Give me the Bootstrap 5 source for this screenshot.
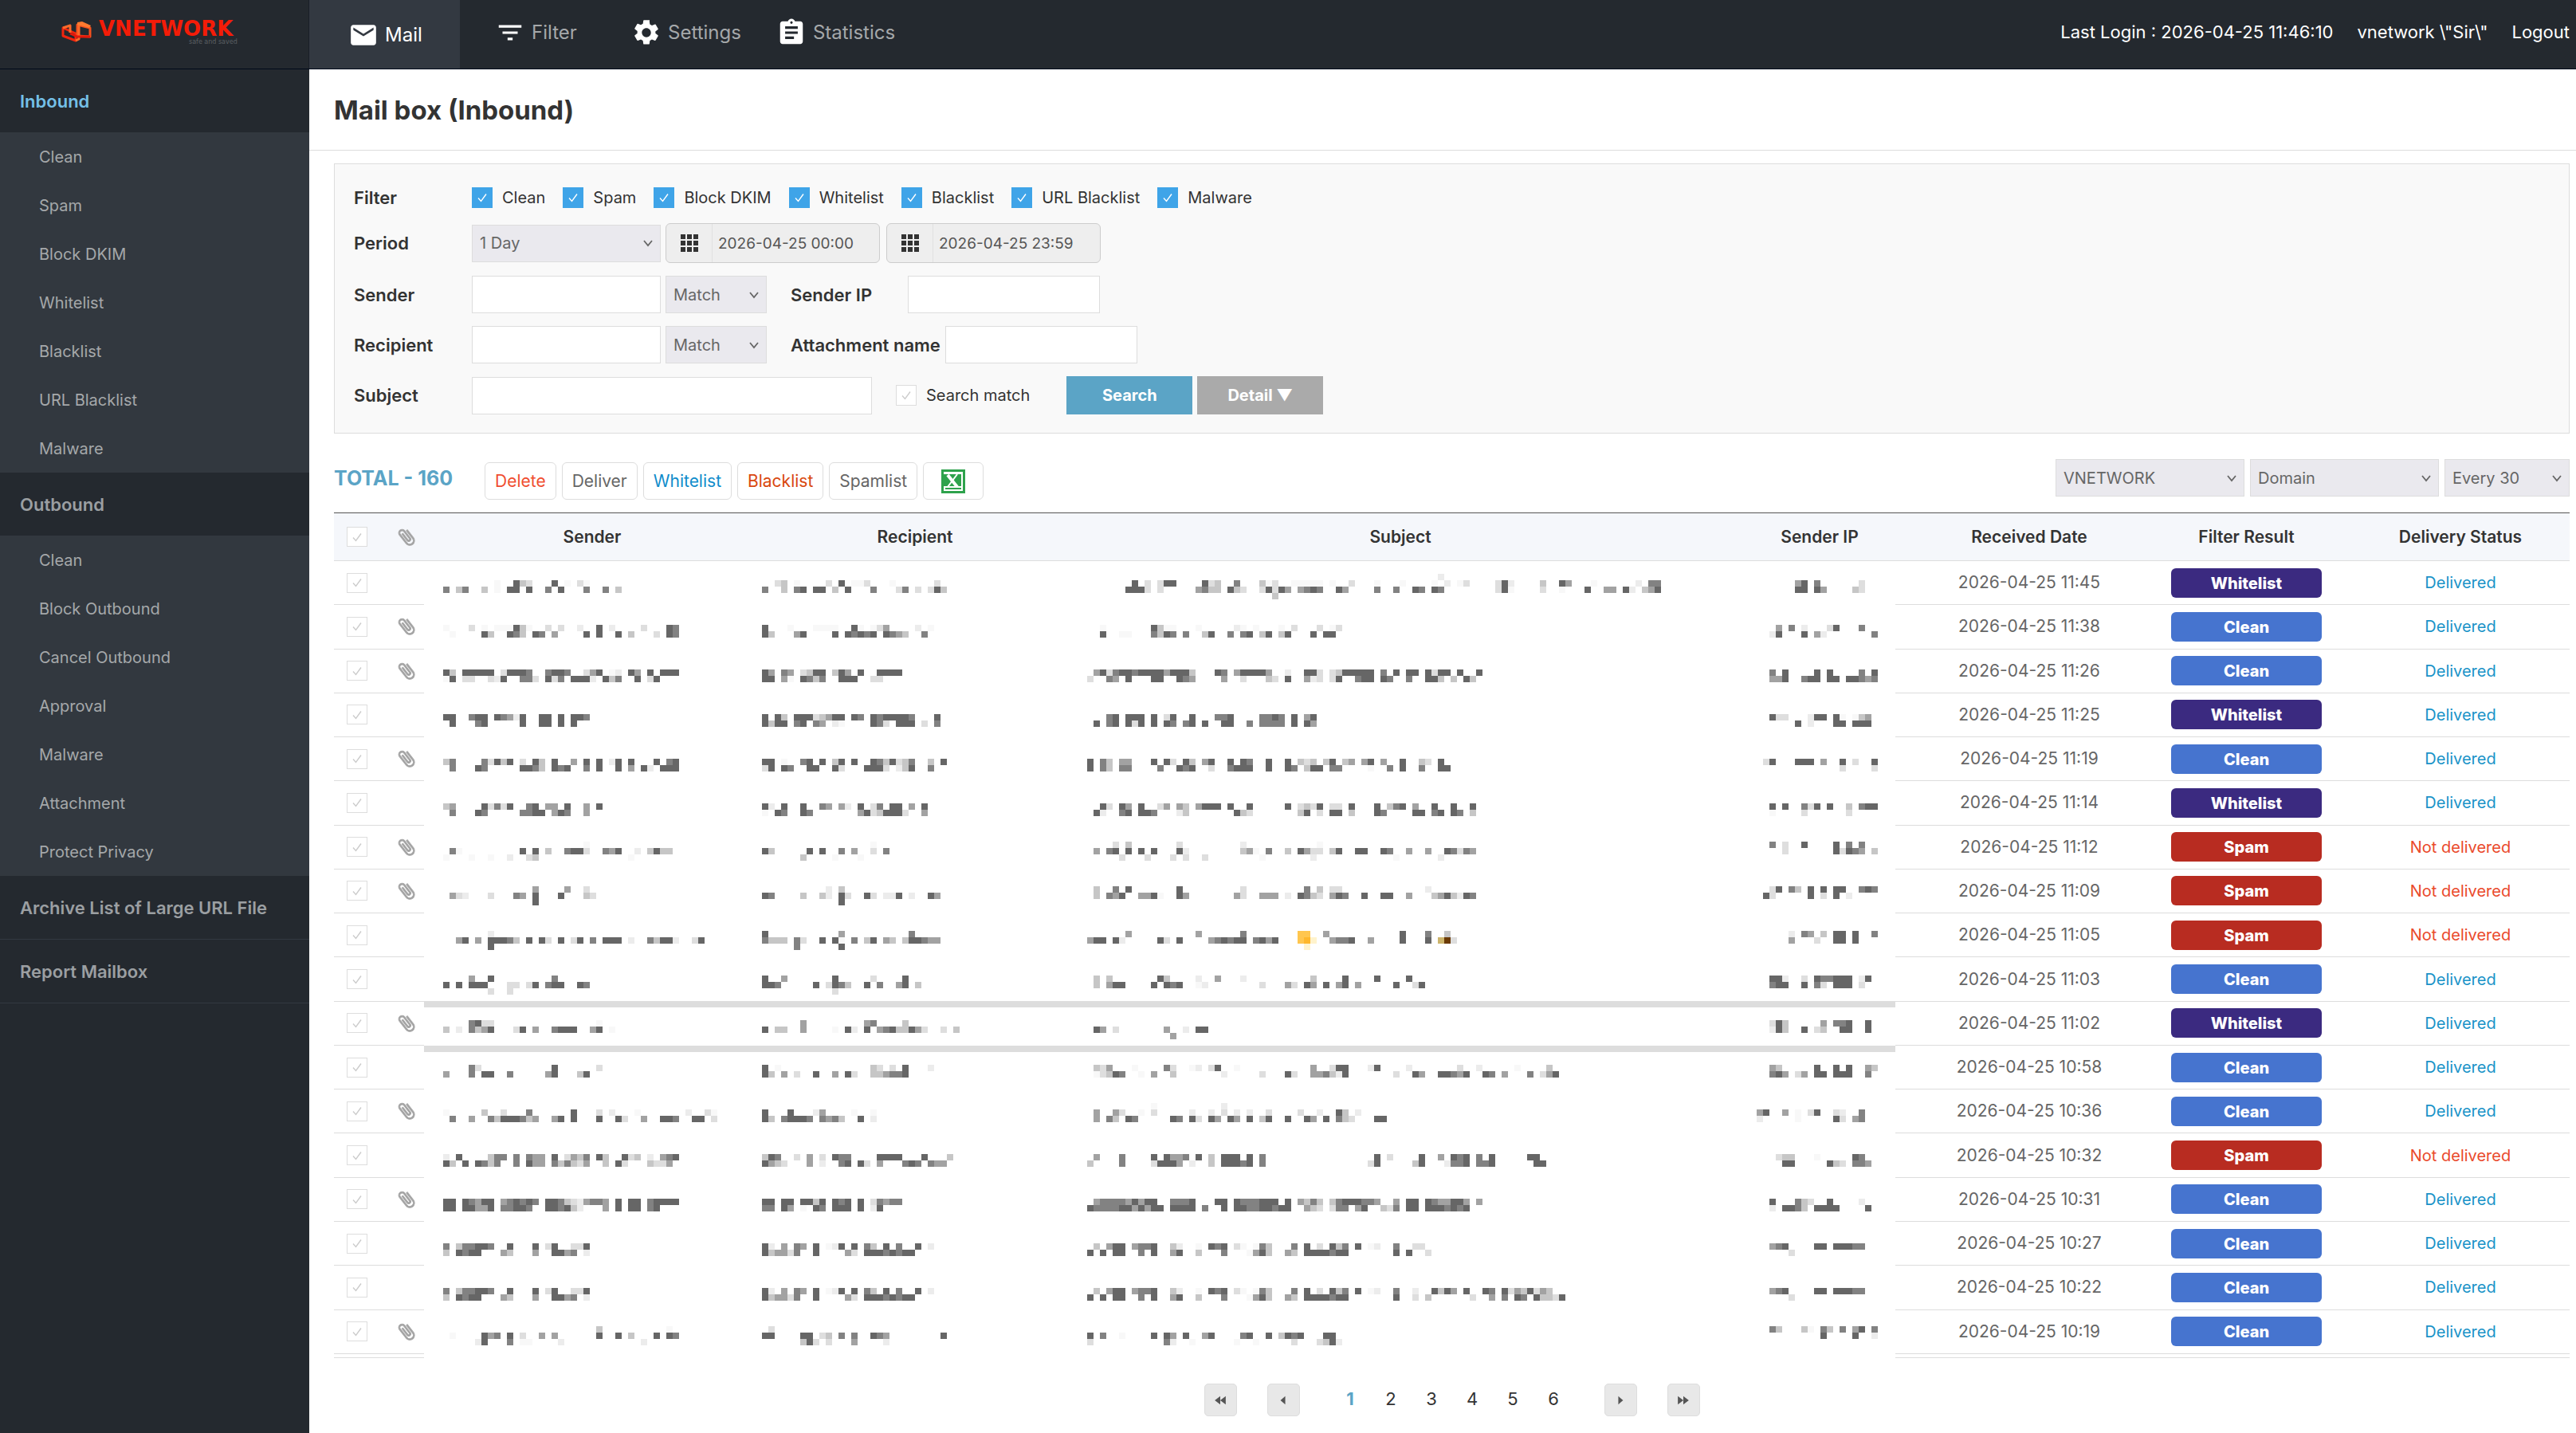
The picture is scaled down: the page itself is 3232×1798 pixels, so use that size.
<!DOCTYPE html>
<html lang="en">
<head>
<meta charset="utf-8">
<meta name="viewport" content="width=device-width, initial-scale=1">
<title>Mail box (Inbound)</title>
<link rel="stylesheet" href="https://cdn.jsdelivr.net/npm/bootstrap@5.3.0/dist/css/bootstrap.min.css">
<style>
  :root { --side-w: 388px; --ink: #333; --line: #ddd; --sky: #5ba4c6; }
  body { font-family: Inter, "Liberation Sans", sans-serif; font-size: 20px; line-height: 26px; color: var(--ink); background: #fff; }
  a { text-decoration: none; color: inherit; }

  .topbar { height: 87px; background: #24292f; border-bottom: 1px solid #00091a; }
  .brand-box { width: var(--side-w); border-right: 1px solid #1a1f28; padding: 16px 0 0 77px; }
  .main-menu a { font-size: 24px; color: #a5a8aa; padding: 0 0 4px 44px; gap: 8px; }
  .main-menu svg { width: 38px; height: 38px; fill: #fff; }
  .main-menu .menu-filter { width: 171px; }
  .main-menu .menu-mail { width: 189px; padding: 2px 0 0 49px; background: #333941; color: #fff; }
  .account { font-size: 22px; color: #fff; gap: 30px; padding: 0 8px 6px 0; }

  .sidebar { width: var(--side-w); background: #24292f; min-height: calc(100vh - 87px); }
  .side-head { font-size: 22px; font-weight: 600; color: #9b9fa2; height: 79px; padding-left: 25px; }
  .side-head.is-open { color: #74c0e8; }
  .side-head.is-ruled { height: 80px; border-bottom: 1px solid #333941; }
  .side-sub { background: #32383f; }
  .side-sub a { height: 61px; padding: 1px 0 0 49px; color: #a5a8aa; }

  .page-title { font-size: 33px; line-height: 40px; font-weight: 700; padding: 31px 31px 30px; border-bottom: 1px solid var(--line); margin: 0; }
  .page-body { padding: 16px 8px 0 31px; }

  .search-panel { background: #f9f9f9; border: 1px solid var(--line); padding: 29px 24px 23px; }
  .field-name { font-size: 22px; font-weight: 600; }
  .lead-name { width: 142px; }
  .side-name { min-width: 141px; margin-left: 24px; }
  .search-panel .line { display: flex; align-items: center; gap: 6px; }
  .search-panel .line:first-child { margin-bottom: 3px; }
  .tick-list { gap: 22px; }
  .tick { gap: 12px; }

  input[type=checkbox] { appearance: none; width: 26px; height: 26px; margin: 0; border: 1px solid var(--line); background: #fff center/16px no-repeat; display: block; flex: none;
    background-image: url("data:image/svg+xml,%3Csvg xmlns='http://www.w3.org/2000/svg' viewBox='0 0 16 16'%3E%3Cpath d='M3 8.5l3.5 4L13 3.5' fill='none' stroke='%23ccc' stroke-width='1.4'/%3E%3C/svg%3E"); }
  input[type=checkbox]:checked { background-color: #3fa4e8; border-color: #3fa4e8;
    background-image: url("data:image/svg+xml,%3Csvg xmlns='http://www.w3.org/2000/svg' viewBox='0 0 16 16'%3E%3Cpath d='M3 8.5l3.5 4L13 3.5' fill='none' stroke='%23fff' stroke-width='1.4'/%3E%3C/svg%3E"); }

  select.flat { appearance: none; height: 47px; border: 1px solid var(--line); border-radius: 0; color: #666; font-size: 20px; padding: 0 28px 0 9px;
    background: #eae9ee no-repeat right 9px center/12px 12px;
    background-image: url("data:image/svg+xml,%3Csvg xmlns='http://www.w3.org/2000/svg' viewBox='0 0 12 12'%3E%3Cpath d='M1 3l5 6 5-6' fill='none' stroke='%23666' stroke-width='1.8'/%3E%3C/svg%3E"); }
  input.plain { height: 47px; border: 1px solid var(--line); background: #fff; padding: 0 9px; color: #666; }
  .w-field { width: 237px; } .w-match { width: 127px; } .w-short { width: 241px; } .w-long { width: 502px; } .w-page { width: 157px; }

  .date-box { width: 269px; height: 50px; background: #eee; border: 1px solid #ccc; border-radius: 6px; margin-right: 2px; overflow: hidden; }
  .date-box svg { width: 57px; height: 22px; flex: none; }
  .date-box input { border: 0; border-left: 1px solid #e0e0e0; background: transparent; height: 48px; width: 100%; font-size: 19px; color: #555; padding: 0 0 0 7px; }

  .act { height: 48px; width: 158px; border: 0; border-radius: 0; color: #fff; font-size: 20px; font-weight: 700; padding: 0; }
  .act:hover { color: #fff; }
  .act-go { background: var(--sky); margin-left: 40px; }
  .act-more { background: #aaa; }

  .tools { padding: 32px 0 16px; gap: 7px; }
  .tools .total { font-size: 25px; font-weight: 700; line-height: 48px; color: var(--sky); width: 182px; }
  .tool { font-size: 21px; line-height: 26px; height: 47px; background: #fff; border: 1px solid var(--line); border-radius: 6px; padding: 1px 12px 0; color: #666; margin-top: 4px; }
  .tool-x { width: 76px; }
  .tool-del { color: #f04e30; } .tool-white { color: #0f8ccb; } .tool-black { color: #d9480f; }

  .mail-table { table-layout: fixed; border-collapse: separate; border-spacing: 0; margin: 0; color: #666; text-align: center; }
  .mail-table > :not(caption) > * > * { padding: 0; vertical-align: middle; border-bottom: 1px solid var(--line); }
  .mail-table > thead > tr > th { height: 61px; background: #f5f7fb; color: #333; font-size: 21px; font-weight: 600; border-top: 1px solid #555; }
  .mail-table > tbody > tr { height: 55px; }
  .mail-table > tbody > tr.tail, .mail-table > tbody > tr.tail > td { height: 5px; font-size: 0; line-height: 0; }
  .mail-table > tbody > tr > td.veil { vertical-align: top; border: 0; overflow: hidden; }
  .mail-table input { height: 25px; margin-left: 16px; }
  .mail-table .clip svg { width: 26px; height: 26px; fill: #999; stroke: #aaa; stroke-width: 1; display: block; margin-left: 20px; }
  .mail-table .when { font-size: 21px; }
  .mail-table > thead > tr > .topic { padding-right: 16px; }
  .mail-table > :not(caption) > * > .last { padding-left: 27px; }
  .sent { color: #1a93c8; } .unsent { color: #ea4a2c; }
  .pill { display: block; height: 37px; line-height: 38px; width: 189px; margin: 0 auto; border-radius: 6px; color: #fff; font-weight: 800; }
  .pill-Whitelist { background: #3b2a80; } .pill-Clean { background: #4674cf; } .pill-Spam { background: #b82c21; }

  .pager { padding: 32px 0 16px; gap: 38px; font-size: 22px; }
  .pager button { width: 41px; height: 41px; border: 1px solid #ddd; border-radius: 5px; background: #e8e8e8; padding: 0; display: flex; align-items: center; justify-content: center; }
  .pager svg { width: 18px; height: 12px; fill: #555; }
  .pager .nums { padding-bottom: 4px; }
  .pager .nums a { width: 51px; text-align: center; }
  .pager .nums .on { color: var(--sky); font-weight: 700; }
</style>
<script src="https://cdn.jsdelivr.net/npm/bootstrap@5.3.0/dist/js/bootstrap.bundle.min.js"></script>
</head>
<body>
<header class="topbar d-flex">
  <a class="brand-box flex-shrink-0" href="#" aria-label="VNETWORK">
    <svg width="240" height="46" viewBox="0 -10 240 46">
      <g stroke-linejoin="round" fill="none" stroke-width="3">
        <path d="M2 9l16 7v9l-16-6z" stroke="#f0250f"/>
        <path d="M20 5l16 4v11l-16-1z" stroke="#f4511e"/>
        <path d="M2 9l9-3v9M18 25l4-2V5" stroke="#ff6a2a"/>
        <path d="M20 2l6-1 11 5-2 3-15-4z" fill="#ff7a30" stroke="none"/>
        <path d="M11 16l9 4 16 0" stroke="#e3170a"/>
      </g>
      <text x="47" y="19" font-family="DejaVu Sans" font-weight="700" font-size="26" fill="#f41c08">VNETWORK</text>
      <text x="160" y="29" font-family="DejaVu Sans" font-size="8" fill="#5c6064">safe and saved</text>
    </svg>
  </a>
  <nav class="main-menu d-flex flex-grow-1">
    <a class="menu-mail d-flex align-items-center" href="#"><svg viewBox="0 0 24 24"><path d="M20 4H4c-1.100 0-2 .9-2 2v12c0 1.100.9 2 2 2h16c1.100 0 2-.9 2-2V6c0-1.100-.9-2-2-2zm0 4l-8 5-8-5V6l8 5 8-5v2z"/></svg>Mail</a>
    <a class="menu-filter d-flex align-items-center" href="#"><svg viewBox="0 0 24 24"><path d="M10 18h4v-2h-4v2zM3 6v2h18V6H3zm3 7h12v-2H6v2z"/></svg>Filter</a>
    <a class="d-flex align-items-center" href="#"><svg viewBox="0 0 24 24"><path d="M19.140 12.940c.04-.3.06-.61.06-.94s-.02-.64-.07-.94l2.030-1.580a.49.49 0 0 0 .12-.61l-1.920-3.320a.49.49 0 0 0-.59-.22l-2.390.96a7 7 0 0 0-1.620-.94l-.36-2.540A.48.48 0 0 0 13.920 2h-3.840a.48.48 0 0 0-.47.41l-.36 2.540c-.59.24-1.130.57-1.620.94l-2.390-.96a.48.48 0 0 0-.59.22L2.740 8.470a.48.48 0 0 0 .12.61l2.030 1.580c-.05.3-.09.63-.09.94s.02.64.07.94l-2.030 1.580a.49.49 0 0 0-.12.61l1.920 3.320c.12.22.37.29.59.22l2.390-.96c.5.38 1.030.7 1.620.94l.36 2.540c.05.24.24.41.48.41h3.840c.24 0 .44-.17.47-.41l.36-2.540a6.700 6.700 0 0 0 1.620-.94l2.390.96c.22.08.47 0 .59-.22l1.920-3.320a.48.48 0 0 0-.12-.61l-2.010-1.580zM12 15.600A3.610 3.610 0 0 1 8.400 12c0-1.980 1.620-3.600 3.600-3.600s3.600 1.620 3.600 3.600-1.620 3.600-3.600 3.600z"/></svg>Settings</a>
    <a class="d-flex align-items-center" href="#"><svg viewBox="0 0 24 24"><path d="M19 3h-4.180C14.400 1.840 13.300 1 12 1s-2.400.84-2.820 2H5c-1.100 0-2 .9-2 2v14c0 1.100.9 2 2 2h14c1.100 0 2-.9 2-2V5c0-1.100-.9-2-2-2zm-7 0c.55 0 1 .45 1 1s-.45 1-1 1-1-.45-1-1 .45-1 1-1zm2 14H7v-2h7v2zm3-4H7v-2h10v2zm0-4H7V7h10v2z"/></svg>Statistics</a>
  </nav>
  <div class="account d-flex align-items-center">
    <span>Last Login : 2026-04-25 11:46:10</span>
    <a href="#">vnetwork \"Sir\"</a>
    <a href="#">Logout</a>
  </div>
</header>

<div class="d-flex">
  <aside class="sidebar flex-shrink-0">
    <a class="side-head is-open d-flex align-items-center" href="#">Inbound</a>
    <nav class="side-sub">
      <a class="d-flex align-items-center" href="#">Clean</a>
      <a class="d-flex align-items-center" href="#">Spam</a>
      <a class="d-flex align-items-center" href="#">Block DKIM</a>
      <a class="d-flex align-items-center" href="#">Whitelist</a>
      <a class="d-flex align-items-center" href="#">Blacklist</a>
      <a class="d-flex align-items-center" href="#">URL Blacklist</a>
      <a class="d-flex align-items-center" href="#">Malware</a>
    </nav>
    <a class="side-head d-flex align-items-center" href="#">Outbound</a>
    <nav class="side-sub">
      <a class="d-flex align-items-center" href="#">Clean</a>
      <a class="d-flex align-items-center" href="#">Block Outbound</a>
      <a class="d-flex align-items-center" href="#">Cancel Outbound</a>
      <a class="d-flex align-items-center" href="#">Approval</a>
      <a class="d-flex align-items-center" href="#">Malware</a>
      <a class="d-flex align-items-center" href="#">Attachment</a>
      <a class="d-flex align-items-center" href="#">Protect Privacy</a>
    </nav>
    <a class="side-head is-ruled d-flex align-items-center" href="#">Archive List of Large URL File</a>
    <a class="side-head is-ruled d-flex align-items-center" href="#">Report Mailbox</a>
  </aside>

  <main class="flex-grow-1">
    <h1 class="page-title">Mail box (Inbound)</h1>
    <div class="page-body">
      <form class="search-panel d-flex flex-column gap-3">
        <div class="line">
          <span class="field-name lead-name">Filter</span>
          <div class="tick-list d-flex" id="ticks"></div>
        </div>
        <div class="line">
          <label class="field-name lead-name" for="period">Period</label>
          <select class="flat w-field" id="period"><option>1 Day</option></select>
          <div class="date-box d-flex align-items-center">
            <svg viewBox="-18 0 57 22" fill="#333"><path d="M0 0h6v6H0zM8 0h6v6H8zM16 0h6v6h-6zM0 8h6v6H0zM8 8h6v6H8zM16 8h6v6h-6zM0 16h6v6H0zM8 16h6v6H8zM16 16h6v6h-6z"/></svg>
            <input type="text" aria-label="From" value="2026-04-25 00:00">
          </div>
          <div class="date-box d-flex align-items-center">
            <svg viewBox="-18 0 57 22" fill="#333"><path d="M0 0h6v6H0zM8 0h6v6H8zM16 0h6v6h-6zM0 8h6v6H0zM8 8h6v6H8zM16 8h6v6h-6zM0 16h6v6H0zM8 16h6v6H8zM16 16h6v6h-6z"/></svg>
            <input type="text" aria-label="To" value="2026-04-25 23:59">
          </div>
        </div>
        <div class="line">
          <label class="field-name lead-name" for="sender">Sender</label>
          <input class="plain w-field" id="sender" type="text">
          <select class="flat w-match" aria-label="Sender match"><option>Match</option></select>
          <label class="field-name side-name" for="ip">Sender IP</label>
          <input class="plain w-short" id="ip" type="text">
        </div>
        <div class="line">
          <label class="field-name lead-name" for="rcpt">Recipient</label>
          <input class="plain w-field" id="rcpt" type="text">
          <select class="flat w-match" aria-label="Recipient match"><option>Match</option></select>
          <label class="field-name side-name" for="att">Attachment name</label>
          <input class="plain w-short" id="att" type="text">
        </div>
        <div class="line">
          <label class="field-name lead-name" for="subj">Subject</label>
          <input class="plain w-long" id="subj" type="text">
          <label class="tick d-flex align-items-center ms-4"><input type="checkbox">Search match</label>
          <button class="btn act act-go" type="button">Search</button>
          <button class="btn act act-more" type="button">Detail ▼</button>
        </div>
      </form>

      <div class="tools d-flex align-items-start">
        <span class="total">TOTAL - 160</span>
        <button class="tool tool-del" type="button">Delete</button>
        <button class="tool" type="button">Deliver</button>
        <button class="tool tool-white" type="button">Whitelist</button>
        <button class="tool tool-black" type="button">Blacklist</button>
        <button class="tool" type="button">Spamlist</button>
        <button class="tool tool-x d-flex align-items-center justify-content-center" type="button" aria-label="Export to Excel">
          <svg width="30" height="30" viewBox="0 0 30 30"><path d="M0 0h30v30H0z" fill="#2ea24c"/><path d="M3 3h24v24H3z" fill="#fff"/><path d="M3 6h20v15H3z" fill="#2ea24c"/><path d="M8 7l12 15" stroke="#fff" stroke-width="4"/><path d="M20 6L8 22" stroke="#fff" stroke-width="2"/><path d="M23 6h2v15h-2zM5 23h20v2H5z" fill="#2ea24c"/></svg>
        </button>
        <select class="flat w-field ms-auto" aria-label="Company"><option>VNETWORK</option></select>
        <select class="flat w-field" aria-label="Domain"><option>Domain</option></select>
        <select class="flat w-page" aria-label="Rows per page"><option>Every 30</option></select>
      </div>

      <table class="table mail-table">
        <colgroup><col style="width:58px"><col style="width:55px"><col style="width:422px"><col style="width:388px"><col><col style="width:190px"><col style="width:336px"><col style="width:209px"><col style="width:301px"></colgroup>
        <thead><tr>
          <th><input type="checkbox" aria-label="Select all"></th>
          <th class="clip"><svg viewBox="0 0 24 24"><path transform="rotate(-38 12 12)" d="M16.500 6v11.500c0 2.210-1.790 4-4 4s-4-1.790-4-4V5a2.500 2.500 0 0 1 5 0v10.500c0 .55-.45 1-1 1s-1-.45-1-1V6H10v9.500a2.500 2.500 0 0 0 5 0V5c0-2.210-1.790-4-4-4S7 2.790 7 5v12.500c0 3.040 2.460 5.500 5.500 5.500s5.500-2.460 5.500-5.500V6h-1.500z"/></svg></th>
          <th>Sender</th><th>Recipient</th><th class="topic">Subject</th><th>Sender IP</th><th>Received Date</th><th>Filter Result</th><th class="last">Delivery Status</th>
        </tr></thead>
        <tbody id="rows"></tbody>
      </table>

      <nav class="pager d-flex justify-content-center align-items-center" aria-label="Pages">
        <button type="button" aria-label="First"><svg viewBox="0 0 18 14"><path d="M9 1v12L1 7zM17 1v12L9 7z"/></svg></button>
        <button type="button" aria-label="Previous"><svg viewBox="0 0 18 14"><path d="M12 1v12L5 7z"/></svg></button>
        <div class="nums d-flex"><a class="on" href="#">1</a><a href="#">2</a><a href="#">3</a><a href="#">4</a><a href="#">5</a><a href="#">6</a></div>
        <button type="button" aria-label="Next"><svg viewBox="0 0 18 14"><path d="M6 1v12l7-6z"/></svg></button>
        <button type="button" aria-label="Last"><svg viewBox="0 0 18 14"><path d="M1 1v12l8-6zM9 1v12l8-6z"/></svg></button>
      </nav>
    </div>
  </main>
</div>

<script>
document.getElementById('ticks').innerHTML = ['Clean','Spam','Block DKIM','Whitelist','Blacklist','URL Blacklist','Malware']
  .map(t => `<label class="tick d-flex align-items-center"><input type="checkbox" checked>${t}</label>`).join('');

// time, result, has attachment
const mails = [
  ['11:45','Whitelist',0],['11:38','Clean',1],['11:26','Clean',1],['11:25','Whitelist',0],['11:19','Clean',1],['11:14','Whitelist',0],
  ['11:12','Spam',1],['11:09','Spam',1],['11:05','Spam',0],['11:03','Clean',0],['11:02','Whitelist',1],['10:58','Clean',0],
  ['10:36','Clean',1],['10:32','Spam',0],['10:31','Clean',1],['10:27','Clean',0],['10:22','Clean',0],['10:19','Clean',1]];

// Pixelated cell contents. Each row holds sender, recipient, subject, IP;
// each of those holds up to four pixel lines (the fourth lies above the first) of "column:shades".
const veil = [
["8:1 11:743 17:7 19:1 21:31|0:6 2:46 6:4 8:1 10:77 13:7 16:6 18:7 22:6 25:6 27:4","2:34 5:1 10:3 12:7 14:11 16:3 20:1 27:3|0:6 3:4 5:67 8:77 11:4 13:7 17:6 21:3 22:6 24:3 26:37 28:4","7:7 9:3 11:377 18:73 20:4 23:6 27:413 32:111 35:11 38:1 41:3 45:1 49:1 54:1 56:2 58:13 64:37 66:2 71:4 74:75 79:1 86:2 88:66|6:777 9:3 11:3 17:5 18:644 22:743 27:37 29:375 33:5676 39:75 45:6 48:6 51:76 54:76 64:37 66:1 71:3 74:1 78:7 81:55 84:72 87:457|29:4|55:2","6:57 9:6 16:3|6:77 9:75 15:43"],
["0:1 4:3 6:1 8:11 10:174 13:1 16:3 18:3 21:2 24:7 26:2 31:3 35:76|1:1 6:74 10:764 14:76 17:5 22:7 24:7 27:7 29:4 33:3 35:76","0:7 4:1 8:1111 14:7 15:1 17:1 18:35 24:2 26:1|0:74 5:57 11:7 13:76767 19:7654 25:6","2:1 10:74 12:1 13:1 17:1 23:21 26:1 30:1 32:3 36:3 38:1 39:3|2:7 5:11 10:6476 15:6 18:47 22:6 24:67 27:47 30:47 35:7 37:77","3:5 5:6 7:2 11:37 16:6|2:27 7:7 9:52 18:6"],
["0:74 3:77777 9:3 10:7776 16:6776 22:357 26:12 29:75 32:7 34:777|0:17 3:33 7:3 8:27 12:663 16:736 20:777 23:2 25:7 26:46 30:7 32:37","0:75 3:65 6:347 9:7 11:47 13:5 15:7 18:7777|0:77 3:51 6:76 8:46 12:777 17:33","1:573 4:677677775 13:777 16:4 20:76 23:577775 31:2 34:773 38:3 39:477777 46:6 48:7 50:77 53:7 54:377 58:7 61:7|0:3 3:65 6:7 10:77 14:76 16:5 21:5 24:3 28:43 31:7 34:52 36:3 38:3 39:7 42:677 46:76 50:6 53:774 57:4 59:74","2:6 4:7 9:7 11:7 16:6 18:7|2:557 7:677 11:77 14:77655 18:6"],
["0:77 4:677 8:7652 12:7 15:77 18:7 20:776|1:7 5:67 12:7 15:77 18:7 20:7","0:7 2:74 5:7776 8:345 11:77 14:76 17:767 20:77 22:76 27:7|0:7477 5:67 8:65 11:21 17:763 21:777 25:3 27:6","3:67 6:777 10:7 12:37 16:7 20:667 27:6676 32:7 34:57|1:7 3:67 6:737 10:7 12:76 15:67 18:7 21:77 25:6 27:6666 32:7 34:75","2:733 8:277 12:71 15:145|6:7 8:2 12:77 15:777"],
["0:46 6:6374 10:7 12:3 14:74 17:7 20:5 22:7 24:7 26:2 27:7 29:7 33:7 35:67|1:6 5:76 12:7764 17:767 22:6 24:7 27:7 29:5 31:72 34:777","0:77 3:1 6:67 9:7 11:47 14:7 17:764 20:73 22:46 26:4 28:7|0:37 3:76 7:77 11:73 16:7773 21:247 26:6","0:7 2:64 5:55 10:7 12:73 15:74 18:57 22:7 24:76 28:7 31:7 33:434 37:47 40:45 43:57 46:5 49:7 52:43 55:7|0:7 2:64 5:66 11:6 14:767 19:3 22:6777 28:7 31:76 34:477 38:66 44:1 47:6 49:7 52:6 55:77","1:37 6:777 10:5 13:7 15:3 18:7|13:3 18:3"],
["0:45 6:7363 10:7 13:67 16:55 19:7 22:5 24:7|1:6 5:76 12:6677 17:57 19:6 22:5","0:72 3:7 6:7 9:65 12:52 15:7 17:36 20:77 23:5 25:7|0:1 2:76 6:76 15:57 17:34 19:777 22:3 25:5","2:73 5:75 8:7 11:35 14:54 17:5777 22:7 25:7 31:7 33:343 36:7 38:33 41:7 45:7 47:467 51:5 54:7 57:7 60:7|1:72 5:67 8:776 14:24 23:743 33:4 34:7 36:3 38:77 41:4 45:76 51:77 54:67 57:76 60:4","2:7 4:7 7:637 11:7 14:4 16:677|2:1 7:3 14:3"],
["22:1|1:61 12:7 14:7 16:4 19:6773 25:657 30:2 32:4744|0:1 4:1 7:1 10:2 13:34 29:1","17:1|0:74 7:7 9:7 12:6 14:5 17:3 19:6|6:4 11:1 15:1","4:3 6:4 14:3 24:2 36:1|1:5 3:67 6:7 8:7 10:7 14:72 24:451 28:6 31:4 33:753 36:3 38:47 42:77 46:76 50:5 53:5 56:763 59:65|5:3 9:3 13:3 15:3 18:3 27:1 35:2 48:1 55:2","2:6 4:3 7:7 12:7 14:6 16:6|4:3 12:7376 16:5 18:4"],
["14:5 19:5 22:3|1:532 7:3 11:65 14:7 18:7 22:43|14:7","10:2 12:4|0:76 6:4 9:42 12:73 16:73 19:221 21:7 23:2 26:75|12:7","1:4 4:6 6:7 14:7 24:3 34:6 36:4 38:33 53:2|1:4 3:657 8:5571 14:75 23:53 27:555 31:2 33:7643 38:576 43:7 46:77 50:5 54:45742 59:76","2:37 5:64 8:7 10:7 12:77 16:676|1:73 8:7 10:3 12:7 14:2"],
["7:2|2:57 5:5 7:7776 11:4 13:7 15:73 18:7 20:37 23:6 25:777 29:2 32:6477 36:2 39:37|7:7","0:7 12:5 23:6|0:6444 5:63 9:7 11:71 14:6 16:47 19:54 22:477 25:65 27:5|5:6 12:7","6:5 17:5 24:6 33:yy 37:5 49:7 53:6 56:4|0:577 4:72 11:73 14:7 19:56767 24:7 26:6757 33:yoz 38:5667 44:5 49:7 53:7 55:kb3|34:z","5:2 7:65 10:4 12:77 15:7 18:6|5:5 9:3 12:77 15:7"],
["4:5 7:7 17:6|0:7 2:7 4:777 10:33 13:37 16:677 21:76|7:3 10:3","0:7 3:5 11:7 17:3 22:7|0:776 8:7 10:3764 16:7 18:6 21:57 24:4|11:3","1:4 3:4 11:74 17:2 20:5 24:2 35:4 40:7 45:7 50:7|1:4 3:577 10:7 12:76 14:7 17:12 27:3 31:53 34:75 37:7 39:57 42:5 48:7 51:37","2:772 7:3 9:76 11:6777 16:2 17:7|2:677 7:7 9:63 12:777 16:3"],
["4:673 7:3 24:1|0:4 2:2 4:6457 11:37 14:5 17:6777 23:57 26:1","6:5 16:56 22:4|0:7 2:44 6:5 11:1 13:72 16:7 18:5674 22:4753 28:3 30:4","|1:75 4:3 12:5 15:2 17:77|13:5","2:374 10:5 12:667 17:7|2:274 7:7 9:34 13:77 17:7"],
["4:63 17:7 24:3|0:5 4:6 6:77 10:6 16:57 21:47","0:7 2:1 17:43 20:3 22:7 26:2|0:74 3:5 5:3 8:7 11:5 13:73 17:445 20:6 21:67","1:434 3:5 7:1 12:63 16:12 19:37 23:1 35:5 38:37 40:7 44:27 50:2 58:3 61:2 67:1 72:4|1:13 3:476 8:1 10:5 13:4 21:2 27:3 31:73 35:5564 39:27 48:3 51:75 55:776 58:53 59:7 62:76 65:5 69:6 71:35 73:7","2:54 9:7 12:7 14:7 17:54|2:675 6:35 9:77 12:777 17:6"],
["0:1 6:4 9:3 13:6 20:7 24:3 26:2 30:1 38:2 41:31|1:6 4:5 7:6473 10:776 13:45 17:57 20:7 24:7 27:73 31:5 34:776 39:77 42:3","0:7 4:7 8:2 9:5 14:1 17:1|0:74 3:67776 9:6564 15:7 17:2","1:5 4:5 5:3 8:1 10:3 16:2 19:2 21:3 23:2 25:2 28:3 33:3 36:2 39:74 42:2|1:5 3:64 6:76 13:76 16:73 19:75 22:75 25:7 27:47 31:7 34:75 37:7 39:643 45:77|10:|10:1 21:2","0:57 4:5 6:1 8:37 12:32 16:6|0:2 6:1 12:73 15:56"],
["0:2 2:7 7:466 11:6 13:655 17:7 19:3546 24:74 28:73 30:4 32:2 34:567|0:74 3:7 5:76 7:4 8:6 11:6 13:755 17:64 19:6 20:435 25:4 27:73 32:433 35:5","0:476 5:3 7:5 9:3 11:766 18:7777 25:7 29:4|0:7543 7:5 9:2 12:67 15:73 18:5 22:676 26:655","1:5 5:6 10:7 12:7556 17:7 19:4 21:777 25:7 27:6 45:7 47:3 52:7 55:5 57:767 61:6 63:7 69:77|0:4 5:6 10:37 12:775 16:2 19:4 21:77767 27:6 44:3 45:7 51:47 56:26 58:67 61:667 70:77","3:344 9:1 15:76|4:77 11:743 15:665"],
["0:77 3:76577 9:567676 16:776 19:4325 23:665 27:7 29:77 32:67777|0:77 3:7755 7:7 9:66776 16:77 18:67 20:42 25:5 27:7 29:77 32:67","0:77 3:77 6:774 9:7 11:76 13:7 15:7 17:36566|0:66 3:75 6:1 8:76 11:777 15:7 17:27","1:5666657577 13:6667 20:77 23:7666777 31:7 33:546 36:4 38:46777665 48:5 50:77 53:76 55:5577 59:5 61:5|0:766667757577 13:7777 18:6 21:7 23:77667767 31:7 34:54 36:3 38:366 42:57 46:43 48:6 50:77 53:77767 58:67 59:7","2:7 6:64 8:3 11:7 16:2|2:2 4:776 7:4 9:7777 17:7"],
["0:6 2:4667 6:76 10:7 14:7 16:37 20:337|0:4 2:7677 9:54 14:5 17:7756 22:2","0:72 3:5 5:65 8:7 10:127 14:7 16:64 19:7 21:6 24:7 26:2|0:74553 5:6 8:7 13:53 16:77767677","1:4 3:577 7:566 10:7 13:42 17:1 19:767 23:31 26:164 32:6 34:7 36:3 38:746 42:7 44:12 48:6 51:33|0:7 2:7 4:77 8:6 10:7 13:57 17:4 21:6 25:1577 28:4 31:54 34:777 37:7677 48:7 50:7 53:3","2:567 9:77 12:7776 16:6|5:3"],
["0:6 2:4667 6:76 10:7 14:7 16:37 20:337|0:4 2:7677 9:54 14:5 17:7756 22:2","0:72 3:5 5:65 8:7 10:127 14:7 16:64 19:7 21:6 24:7 26:2|0:74553 5:6 8:7 13:53 16:77767677","1:4 3:577 7:566 10:7 13:42 17:1 19:767 23:31 26:164 32:6 34:7 36:3 38:746 42:7 44:12 48:6 51:2 54:74 56:75 59:7 62:76 65:73 67:54 69:73 71:54|0:7 2:7 4:77 8:6 10:7 13:57 17:4 21:6 25:1577 28:4 31:54 34:777 37:7677 48:7 51:3 53:4 60:3 63:5 65:6 67:76 70:7443 74:7","2:567 9:77 12:7776 16:6|5:3"],
["24:4 35:1|1:1 6:756 10:7 12:3 15:5 17:5 24:7 27:7 29:4 33:7 35:76|5:27 10:6 12:11 18:2 31:2","1:3|0:77 6:77 9:34 12:6 14:6 17:765 28:7|6:47 8:3 10:3 14:5 19:2","|0:7 2:6 5:1 10:7 12:75 15:7 18:57 24:67 28:7 30:476 33:7 37:77|0:3 12:62 16:1 23:1 26:1 32:3 36:3472","2:64 7:41 10:64 13:6 15:57 18:6|10:7 15:7 18:2"]
];
const shade = {1:'#f8f8f8',2:'#ececec',3:'#dedede',4:'#c6c6c6',5:'#a2a2a2',6:'#828282',7:'#666',y:'#ffc64e',o:'#feb72c',z:'#fff3cc',k:'#ccb46c',b:'#6b3a05'};
const left = [24, 424, 832, 1672], cell = 8;
let art = '';
veil.forEach((row, r) => {
  // blocks snap to the 8px grid, so they slip back one cell twice on the way down
  const top = 24 + r * 56 - (r > 16 ? 16 : r > 5 ? 8 : 0);
  row.forEach((f, c) => f.split('|').forEach((ln, i) => {
    const y = top + (i === 3 ? -cell : i * cell);
    ln.split(' ').filter(Boolean).forEach(t => {
      const [x, s] = t.split(':');
      [...s].forEach((k, n) => art += `<rect x="${left[c] + (+x + n) * cell}" y="${y}" width="8" height="8" fill="${shade[k]}"/>`);
    });
  }));
});
art += '<path d="M0 552h1846v8H0zM0 608h1846v8H0z" fill="#ddd"/>';

const clip = document.querySelector('th.clip').innerHTML;
document.getElementById('rows').innerHTML = mails.map(([t, res, att], n) => `<tr>
  <td><input type="checkbox" aria-label="Select mail ${t}"></td><td class="clip">${att ? clip : ''}</td>
  ${n ? '' : `<td class="veil" colspan="4" rowspan="19"><svg class="d-block" width="1846" height="1000" shape-rendering="crispEdges">${art}</svg></td>`}
  <td class="when">2026-04-25 ${t}</td><td><span class="pill pill-${res}">${res}</span></td>
  <td class="last"><a href="#" class="${res === 'Spam' ? 'unsent">Not delivered' : 'sent">Delivered'}</a></td></tr>`).join('') +
  '<tr class="tail"><td></td><td></td><td></td><td></td><td></td></tr>';
</script>
</body>
</html>
